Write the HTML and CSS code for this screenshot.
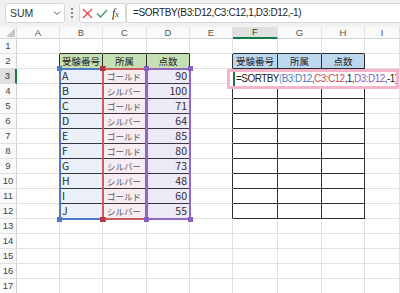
FILE: index.html
```html
<!DOCTYPE html>
<html lang="ja">
<head>
    <meta charset="UTF-8">
    <title>SORTBY</title>
    <link rel="stylesheet" href="styles.css">
</head>
<body>
    <div class="topbar">
        <div class="namebox">
            <span>SUM</span>
            <svg width="8" height="6" viewBox="0 0 8 6"><path d="M1 1.5 L4 4.5 L7 1.5" fill="none" stroke="#555" stroke-width="1"/></svg>
        </div>
        <div class="dots">
            <svg width="4" height="12" viewBox="0 0 4 12"><circle cx="2" cy="2" r="1" fill="#666"/><circle cx="2" cy="6" r="1" fill="#666"/><circle cx="2" cy="10" r="1" fill="#666"/></svg>
        </div>
        <div class="fxgroup">
            <svg width="11" height="11" viewBox="0 0 11 11"><path d="M1 1 L10 10 M10 1 L1 10" stroke="#e0474c" stroke-width="1.3" fill="none"/></svg>
            <svg width="12" height="11" viewBox="0 0 12 11"><path d="M1 5.5 L4.5 9 L11 2" stroke="#3c9a5f" stroke-width="1.3" fill="none"/></svg>
            <span class="fx">f<small>x</small></span>
        </div>
        <div class="formula">=SORTBY(B3:D12,C3:C12,1,D3:D12,-1)</div>
    </div>

    <div class="sheet">
        <table class="grid">
            <colgroup>
                <col style="width:17px"><col style="width:43px"><col style="width:43px"><col style="width:44px"><col style="width:43px">
                <col style="width:43px"><col style="width:45px"><col style="width:44px"><col style="width:43px"><col style="width:35px">
            </colgroup>
            <tr class="colhead">
                <td class="corner"><svg width="9" height="9" viewBox="0 0 9 9"><path d="M9 0 L9 9 L0 9 Z" fill="#c8c8c8"/></svg></td>
                <td>A</td><td>B</td><td>C</td><td>D</td><td>E</td><td class="sel-col">F</td><td>G</td><td>H</td><td>I</td>
            </tr>
            <tr>
                <td class="rh">1</td><td></td><td class="bb"></td><td class="bb"></td><td class="bb"></td><td></td><td class="bb"></td><td class="bb"></td><td class="bb"></td><td></td>
            </tr>
            <tr>
                <td class="rh">2</td><td class="br"></td>
                <td class="bb br head-g">受験番号</td><td class="bb br head-g">所属</td><td class="bb br head-g">点数</td>
                <td class="br"></td>
                <td class="bb br head-b">受験番号</td><td class="bb br head-b">所属</td><td class="bb br head-b">点数</td>
                <td></td>
            </tr>
            <tr>
                <td class="rh sel-row">3</td><td class="br"></td>
                <td class="bb br">A</td><td class="bb br jp">ゴールド</td><td class="bb br num">90</td>
                <td class="br"></td><td class="bb br"></td><td class="bb br"></td><td class="bb br"></td><td></td>
            </tr>
            <tr>
                <td class="rh">4</td><td class="br"></td>
                <td class="bb br">B</td><td class="bb br jp">シルバー</td><td class="bb br num">100</td>
                <td class="br"></td><td class="bb br"></td><td class="bb br"></td><td class="bb br"></td><td></td>
            </tr>
            <tr>
                <td class="rh">5</td><td class="br"></td>
                <td class="bb br">C</td><td class="bb br jp">ゴールド</td><td class="bb br num">71</td>
                <td class="br"></td><td class="bb br"></td><td class="bb br"></td><td class="bb br"></td><td></td>
            </tr>
            <tr>
                <td class="rh">6</td><td class="br"></td>
                <td class="bb br">D</td><td class="bb br jp">シルバー</td><td class="bb br num">64</td>
                <td class="br"></td><td class="bb br"></td><td class="bb br"></td><td class="bb br"></td><td></td>
            </tr>
            <tr>
                <td class="rh">7</td><td class="br"></td>
                <td class="bb br">E</td><td class="bb br jp">ゴールド</td><td class="bb br num">85</td>
                <td class="br"></td><td class="bb br"></td><td class="bb br"></td><td class="bb br"></td><td></td>
            </tr>
            <tr>
                <td class="rh">8</td><td class="br"></td>
                <td class="bb br">F</td><td class="bb br jp">ゴールド</td><td class="bb br num">80</td>
                <td class="br"></td><td class="bb br"></td><td class="bb br"></td><td class="bb br"></td><td></td>
            </tr>
            <tr>
                <td class="rh">9</td><td class="br"></td>
                <td class="bb br">G</td><td class="bb br jp">シルバー</td><td class="bb br num">73</td>
                <td class="br"></td><td class="bb br"></td><td class="bb br"></td><td class="bb br"></td><td></td>
            </tr>
            <tr>
                <td class="rh">10</td><td class="br"></td>
                <td class="bb br">H</td><td class="bb br jp">シルバー</td><td class="bb br num">48</td>
                <td class="br"></td><td class="bb br"></td><td class="bb br"></td><td class="bb br"></td><td></td>
            </tr>
            <tr>
                <td class="rh">11</td><td class="br"></td>
                <td class="bb br">I</td><td class="bb br jp">ゴールド</td><td class="bb br num">60</td>
                <td class="br"></td><td class="bb br"></td><td class="bb br"></td><td class="bb br"></td><td></td>
            </tr>
            <tr>
                <td class="rh">12</td><td class="br"></td>
                <td class="bb br">J</td><td class="bb br jp">シルバー</td><td class="bb br num">55</td>
                <td class="br"></td><td class="bb br"></td><td class="bb br"></td><td class="bb br"></td><td></td>
            </tr>
            <tr><td class="rh">13</td><td></td><td></td><td></td><td></td><td></td><td></td><td></td><td></td><td></td></tr>
            <tr><td class="rh">14</td><td></td><td></td><td></td><td></td><td></td><td></td><td></td><td></td><td></td></tr>
            <tr><td class="rh">15</td><td></td><td></td><td></td><td></td><td></td><td></td><td></td><td></td><td></td></tr>
            <tr><td class="rh">16</td><td></td><td></td><td></td><td></td><td></td><td></td><td></td><td></td><td></td></tr>
            <tr><td class="rh">17</td><td></td><td></td><td></td><td></td><td></td><td></td><td></td><td></td><td></td></tr>
        </table>

        <!-- range highlights while editing the formula -->
        <div class="range range-b"><i class="tl"></i><i class="tr"></i><i class="bl"></i><i class="br"></i></div>
        <div class="range range-c"><i class="tl"></i><i class="tr"></i><i class="bl"></i><i class="br"></i></div>
        <div class="range range-d"><i class="tl"></i><i class="tr"></i><i class="bl"></i><i class="br"></i></div>

        <div class="edit">
            <span class="edit-text">=SORTBY<span class="c-paren">(</span><span class="c-b">B3:D12</span>,<span class="c-c">C3:C12</span>,1,<span class="c-d">D3:D12</span>,-1)</span>
        </div>
    </div>
</body>
</html>
```

FILE: styles.css
```css
body {
    margin: 0;
    width: 400px;
    height: 293px;
    overflow: hidden;
    background-color: #fff;
    font-family: 'Liberation Sans', 'Noto Sans CJK JP', sans-serif;
}

/* formula bar */
.topbar {
    height: 27px;
    box-sizing: border-box;
    padding: 3px 0 0 5px;
    background-color: #f1f1f1;
    display: flex;
    align-items: flex-start;
}

.namebox {
    width: 60px;
    height: 20px;
    box-sizing: border-box;
    border: 1px solid #d6d6d6;
    border-radius: 3px;
    background-color: #fff;
    display: flex;
    align-items: center;
    justify-content: space-between;
    padding: 0 3px 0 4px;
    font-size: 10.5px;
    color: #333;
}

.dots {
    width: 14px;
    height: 20px;
    display: flex;
    align-items: center;
    justify-content: center;
}

.fxgroup {
    width: 47px;
    height: 20px;
    box-sizing: border-box;
    border: 1px solid #d6d6d6;
    border-radius: 3px;
    background-color: #fff;
    display: flex;
    align-items: center;
    gap: 3px;
    padding-left: 2px;
}

.fx {
    font-family: 'Liberation Serif', serif;
    font-style: italic;
    font-size: 12px;
    color: #333;
    margin-left: 1px;
}

.fx small {
    font-size: 8px;
}

.formula {
    flex: 1;
    height: 20px;
    box-sizing: border-box;
    border: 1px solid #d6d6d6;
    border-right: none;
    border-radius: 3px 0 0 3px;
    background-color: #fff;
    padding-left: 6px;
    font-size: 10px;
    letter-spacing: -0.35px;
    line-height: 18px;
    color: #222;
    white-space: nowrap;
}

/* sheet grid */
.sheet {
    position: relative;
}

.grid {
    border-collapse: separate;
    border-spacing: 0;
    table-layout: fixed;
    width: 400px;
}

.grid td {
    height: 15px;
    box-sizing: border-box;
    padding: 0 2px;
    border-right: 1px solid #e1e1e1;
    border-bottom: 1px solid #e1e1e1;
    font-family: 'Noto Sans CJK JP', sans-serif;
    font-size: 10.5px;
    line-height: 12px;
    color: #222;
    white-space: nowrap;
    overflow: hidden;
}

.grid .colhead td {
    height: 12px;
    font-family: 'Liberation Sans', sans-serif;
    font-size: 9.5px;
    line-height: 10px;
    text-align: center;
    color: #555;
    background-color: #fafafa;
    border-bottom-color: #d4d4d4;
}

.grid .colhead .corner {
    text-align: right;
    vertical-align: bottom;
    padding: 0 1px 1px 0;
    line-height: 0;
}

.grid .rh {
    font-family: 'Liberation Sans', sans-serif;
    font-size: 9.5px;
    text-align: center;
    color: #444;
    background-color: #fafafa;
    border-right-color: #d4d4d4;
}

.grid .colhead .sel-col {
    background-color: #e0e0e0;
    border-bottom: 2px solid #127c42;
    color: #333;
}

.grid .sel-row {
    background-color: #e0e0e0;
    border-right: 2px solid #127c42;
    color: #333;
}

.grid td.bb {
    border-bottom-color: #2e2e2e;
}

.grid td.br {
    border-right-color: #2e2e2e;
}

.grid .head-g {
    background-color: #c6e0b4;
    text-align: center;
    font-size: 9.5px;
}

.grid .head-b {
    background-color: #bdd7ee;
    text-align: center;
    font-size: 9.5px;
}

.grid .jp {
    font-size: 8.5px;
    color: #555;
    padding-left: 4px;
}

.grid .num {
    text-align: right;
}

/* coloured reference frames */
.range {
    position: absolute;
    top: 41px;
    width: 45px;
    height: 152px;
    box-sizing: border-box;
    border: 2px solid;
}

.range i {
    position: absolute;
    width: 5px;
    height: 5px;
    background-color: inherit;
}

.range .tl { left: -4px; top: -4px; }
.range .tr { right: -4px; top: -4px; }
.range .bl { left: -4px; bottom: -4px; }
.range .br { right: -4px; bottom: -4px; }

.range-b {
    left: 59px;
    border-color: #4f7ac4;
    background-color: rgba(79, 122, 196, 0.12);
}

.range-b i { background-color: #4f7ac4; }

.range-c {
    left: 102px;
    border-color: #cd5a63;
    background-color: rgba(170, 110, 150, 0.12);
}

.range-c i { background-color: #b8363f; }

.range-d {
    left: 146px;
    border-color: #9168c4;
    background-color: rgba(130, 100, 200, 0.14);
}

.range-d i { background-color: #8a5fc0; }

/* cell being edited */
.edit {
    position: absolute;
    left: 227px;
    top: 42px;
    width: 172px;
    height: 20px;
    box-sizing: border-box;
    border: 3px solid #f4b4c9;
    background-color: #fff;
    display: flex;
    overflow: hidden;
}

.edit-text {
    flex: none;
    margin-left: 3px;
    border-left: 2px solid #217346;
    padding-left: 1px;
    font-size: 10px;
    letter-spacing: -0.55px;
    line-height: 14px;
    color: #222;
    white-space: nowrap;
}

.c-paren { color: #6f8fcf; }
.c-b { color: #4f7ac4; }
.c-c { color: #cd4b55; }
.c-d { color: #8a5fc0; }
```
